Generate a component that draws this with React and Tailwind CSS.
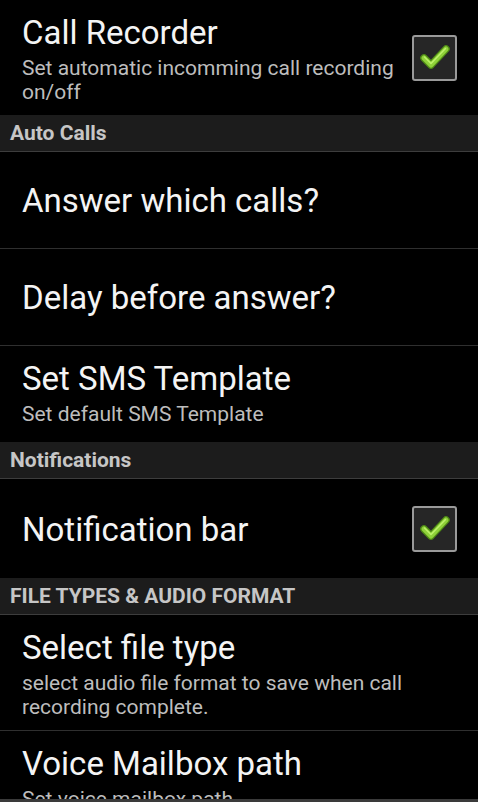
import React from 'react';

/**
 * Android-style preference screen for a call recorder app
 */
const font = { fontFamily: 'Roboto, "Noto Sans", sans-serif' };

const CheckMark = () => (
	<div className="w-[45px] h-[46px] shrink-0 rounded-[3px] border-2 border-[#9a9a9a] bg-[#262626] flex items-center justify-center">
		<svg width="30" height="26" viewBox="0 0 30 26" className="-mt-[2px]">
			<path d="M4 14l7 7L26 5" fill="none" stroke="#4f8a16" strokeWidth="7.5" strokeLinecap="round" strokeLinejoin="round" />
			<path d="M4 14l7 7L26 5" fill="none" stroke="#8fd13a" strokeWidth="5" strokeLinecap="round" strokeLinejoin="round" />
			<path d="M4.5 13l6.5 6.5L25.5 4.5" fill="none" stroke="#bdf06a" strokeWidth="1.6" strokeLinecap="round" strokeLinejoin="round" />
		</svg>
	</div>
);

const Header = ({ children }) => (
	<div className="h-[37px] bg-[#1c1c1c] border-b border-[#3d3d3d] px-[10px] text-[21px] leading-[36px] font-bold text-[#c6c6c6]">
		{children}
	</div>
);

const Pref = ({ title, summary, checked, divider, minH = 'min-h-[96px]' }) => (
	<div
		className={`flex items-center pl-[22px] pr-[21px] ${minH} ${divider ? 'border-b border-[#2f2f2f]' : ''}`}
	>
		<div className={`flex-1 min-w-0 flex flex-col pb-[11px] pt-[13px] ${summary ? 'self-start' : ''}`}>
			<div className="text-[33px] leading-[40px] text-[#f4f4f4]">{title}</div>
			{summary && (
				<div className="mt-[3px] text-[21px] leading-[24px] text-[#bdbdbd] pr-2">{summary}</div>
			)}
		</div>
		{checked && <CheckMark />}
	</div>
);

export default function App() {
	return (
		<div className="w-[478px] h-[802px] bg-black flex flex-col overflow-hidden" style={font}>
			<div className="flex-1 overflow-hidden">
				<Pref title="Call Recorder" summary="Set automatic incomming call recording on/off" checked />
				<Header>Auto Calls</Header>
				<Pref title="Answer which calls?" divider minH="min-h-[97px]" />
				<Pref title="Delay before answer?" divider minH="min-h-[97px]" />
				<Pref title="Set SMS Template" summary="Set default SMS Template" />
				<Header>Notifications</Header>
				<Pref title="Notification bar" checked minH="min-h-[99px]" />
				<Header>FILE TYPES &amp; AUDIO FORMAT</Header>
				<Pref title="Select file type" summary="select audio file format to save when call recording complete." divider />
				<Pref title="Voice Mailbox path" summary="Set voice mailbox path" />
			</div>
			<div className="h-[3px] bg-[#3a3a3a]" />
		</div>
	);
}
